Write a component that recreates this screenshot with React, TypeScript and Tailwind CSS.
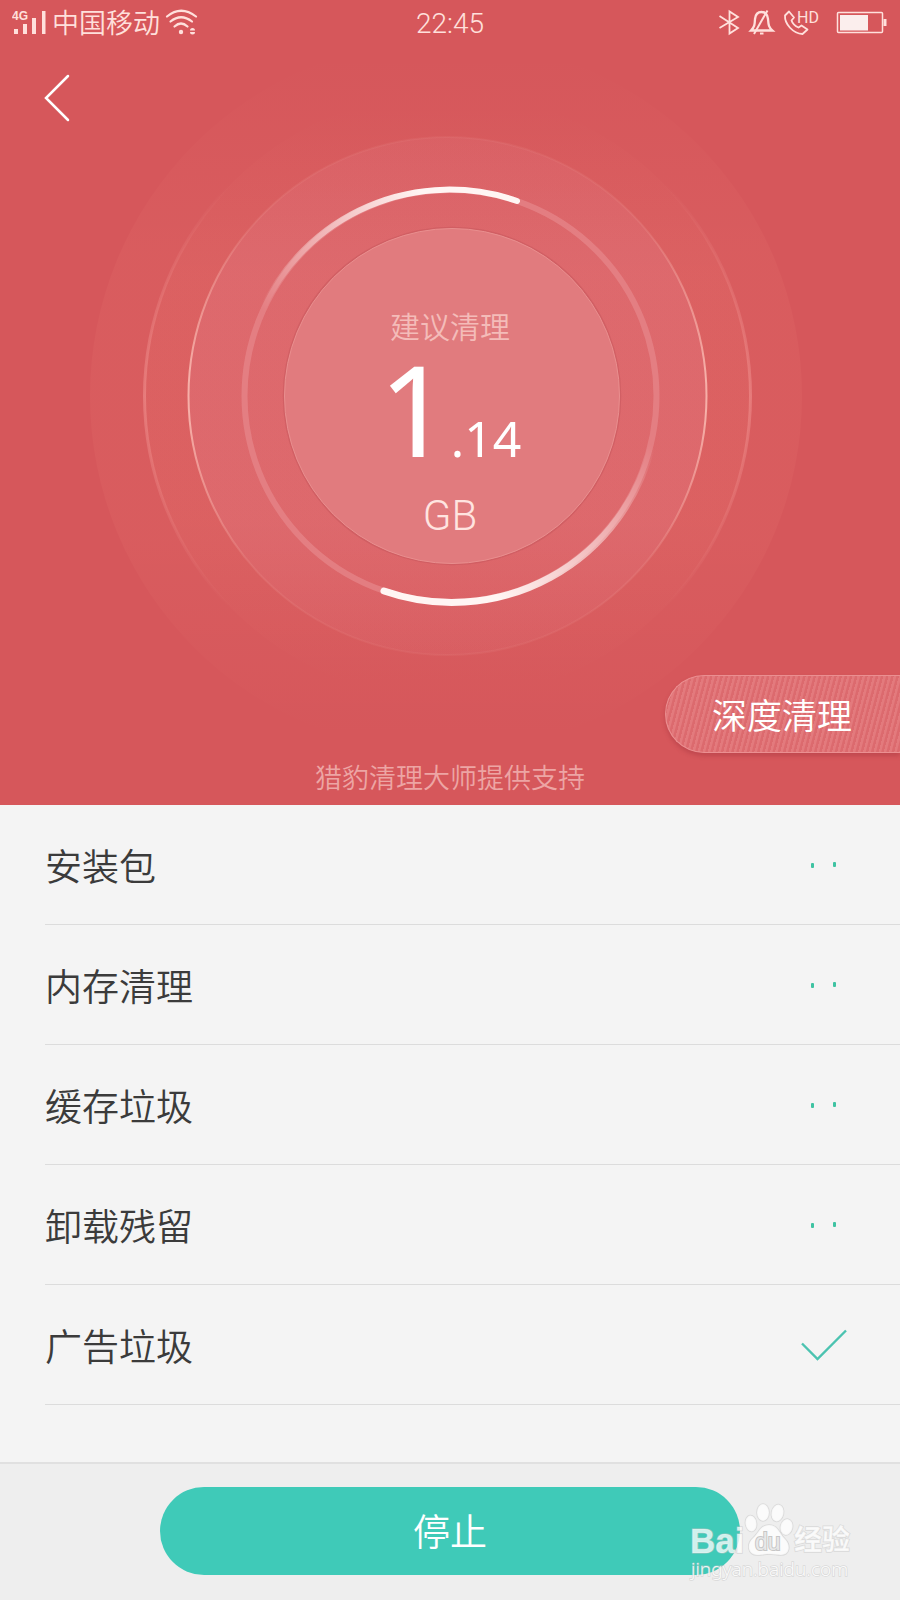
type RowStatus = 'scanning' | 'done';

interface ScanItem {
  name: string;
  status: RowStatus;
}

const items: ScanItem[] = [
  { name: '安装包', status: 'scanning' },
  { name: '内存清理', status: 'scanning' },
  { name: '缓存垃圾', status: 'scanning' },
  { name: '卸载残留', status: 'scanning' },
  { name: '广告垃圾', status: 'done' }
];

const SignalIcon = () => (
  <svg width="36" height="26" viewBox="12 9 36 26" fill="#ffe0dc">
    <text x="12" y="20" fontSize="12" fontWeight="700" fontFamily="Liberation Sans, sans-serif">4G</text>
    <rect x="14" y="29" width="4" height="5" />
    <rect x="23" y="24" width="4" height="10" />
    <rect x="32" y="18" width="4" height="16" />
    <rect x="42" y="11" width="3.500" height="23" />
  </svg>
);

const WifiIcon = () => (
  <svg width="34" height="26" viewBox="165 9 34 26" fill="none" stroke="#ffe0dc" strokeWidth="2.2" strokeLinecap="round">
    <path d="M168 16.500Q182 5 197 16.500" />
    <path d="M171.500 21.500Q182 13 193 21.500" />
    <path d="M175.500 26.500Q182 20.500 188.500 26.500" />
    <circle cx="182" cy="32" r="2.200" fill="#ffe0dc" stroke="none" />
    <path d="M191 30.500a2.500 2.500 0 0 1 5 0zM191 32a2.500 2.500 0 0 0 5 0z" fill="#ffe0dc" stroke="none" />
  </svg>
);

const StatusIcons = () => (
  <svg width="170" height="28" viewBox="718 8 170 28" fill="none" stroke="#ffe0dc" strokeWidth="1.8">
    {/* bluetooth */}
    <path d="M719.500 16L738 28L729.500 33.500V11.500L738 17L719.500 28" />
    {/* muted bell */}
    <path d="M751 30.500H772.500C768.500 27 768.500 25 768 19C767.500 14.500 765 12 761.500 12S755.500 14.500 755 19C754.700 25 754.500 27 751 30.500Z" strokeWidth="2.3" />
    <path d="M767.500 10.500L754 34" strokeWidth="2" />
    <path d="M760 33.500h3.500" strokeWidth="2" />
    {/* call */}
    <path d="M789 11.500L785 15.500C784.500 24 793 33.500 802.500 34L807.500 29.500L801.500 25.500L798.500 27.500C795 26 792.500 23.500 791.500 20.500L794 17.500Z" strokeLinejoin="round" />
    <text x="797" y="23" fontSize="16" fontWeight="400" fontFamily="Roboto, sans-serif" fill="#ffe0dc" stroke="none">HD</text>
    {/* battery */}
    <rect x="837.500" y="12.500" width="45" height="20" rx="1" strokeWidth="1.500" />
    <rect x="840" y="15" width="28" height="15.500" fill="#fbeeed" stroke="none" />
    <path d="M885 19V26" strokeWidth="3" />
  </svg>
);

const DialRings = () => (
  <svg className="col-start-1 row-start-1 mt-9 self-start justify-self-center" width="720" height="720" viewBox="90 36 720 720" fill="none">
    <defs>
      <linearGradient id="halo" x1="0" y1="0" x2="0" y2="1">
        <stop offset="0.02" stopColor="#ffa08c" stopOpacity="0" />
        <stop offset="0.3" stopColor="#ffa08c" stopOpacity="0.07" />
        <stop offset="0.7" stopColor="#ffa08c" stopOpacity="0.07" />
        <stop offset="0.98" stopColor="#ffa08c" stopOpacity="0" />
      </linearGradient>
      <linearGradient id="disc" x1="0" y1="0" x2="0" y2="1">
        <stop offset="0" stopColor="#e0747c" stopOpacity="0.26" />
        <stop offset="0.25" stopColor="#e0747c" stopOpacity="0.42" />
        <stop offset="0.75" stopColor="#e0747c" stopOpacity="0.4" />
        <stop offset="1" stopColor="#e0747c" stopOpacity="0.16" />
      </linearGradient>
      <linearGradient id="edge" x1="0" y1="0" x2="0" y2="1">
        <stop offset="0" stopColor="#ffc8be" stopOpacity="0.06" />
        <stop offset="0.18" stopColor="#ffc8be" stopOpacity="0.12" />
        <stop offset="0.46" stopColor="#ffc8be" stopOpacity="0.75" />
        <stop offset="0.54" stopColor="#ffc8be" stopOpacity="0.75" />
        <stop offset="0.82" stopColor="#ffc8be" stopOpacity="0.12" />
        <stop offset="1" stopColor="#ffc8be" stopOpacity="0.06" />
      </linearGradient>
      <linearGradient id="edgeSoft" x1="0" y1="0" x2="0" y2="1">
        <stop offset="0.15" stopColor="#ffb4b0" stopOpacity="0" />
        <stop offset="0.5" stopColor="#ffb4b0" stopOpacity="0.34" />
        <stop offset="0.85" stopColor="#ffb4b0" stopOpacity="0" />
      </linearGradient>
      <linearGradient id="arcTop" gradientUnits="userSpaceOnUse" x1="262" y1="310" x2="420" y2="190">
        <stop offset="0" stopColor="#fff5f3" stopOpacity="0" />
        <stop offset="1" stopColor="#fff5f3" />
      </linearGradient>
      <linearGradient id="arcBottom" gradientUnits="userSpaceOnUse" x1="500" y1="600" x2="652" y2="445">
        <stop offset="0" stopColor="#fff5f3" />
        <stop offset="1" stopColor="#fff5f3" stopOpacity="0" />
      </linearGradient>
    </defs>
    <circle cx="446" cy="396" r="356" fill="url(#halo)" />
    <circle cx="447.5" cy="396" r="303" fill="url(#halo)" stroke="url(#edgeSoft)" strokeWidth="3" />
    <circle cx="447.5" cy="396" r="259" fill="url(#disc)" stroke="url(#edge)" strokeWidth="2" />
    <circle cx="450.5" cy="396" r="206" stroke="#e68689" strokeOpacity="0.75" strokeWidth="6" />
    <path d="M262 310A206 206 0 0 1 517 201" stroke="url(#arcTop)" strokeWidth="6" strokeLinecap="round" />
    <path d="M384 591A206 206 0 0 0 652 445" stroke="url(#arcBottom)" strokeWidth="7" strokeLinecap="round" />
    <circle cx="452" cy="396" r="168.500" stroke="#c6565b" strokeOpacity="0.5" strokeWidth="1.500" />
    <circle cx="452" cy="396" r="167.500" fill="#e17b7e" stroke="#e98f8f" strokeWidth="1" />
  </svg>
);

const StatusMark = ({ status }: { status: RowStatus }) =>
  status === 'done' ? (
    <svg width="48" height="34" viewBox="0 0 48 34" fill="none" stroke="#4bc3b0" strokeWidth="2.4" role="img" aria-label="完成">
      <path d="M2 15.500L17.500 31L46 2.500" />
    </svg>
  ) : (
    <svg width="48" height="34" viewBox="0 0 48 34" fill="#3fc3a2" role="img" aria-label="扫描中">
      <rect x="11" y="15" width="3" height="5" rx="1" />
      <rect x="33" y="14" width="3" height="5" rx="1" />
    </svg>
  );

const Watermark = () => (
  <svg className="absolute right-10 bottom-4" width="174" height="90" viewBox="686 1494 174 90" fill="#ffffff" fillOpacity="0.75" stroke="#c4c4c4" strokeOpacity="0.5" strokeWidth="1.500" paintOrder="stroke">
    <ellipse cx="751" cy="1523.500" rx="5.500" ry="8" transform="rotate(-8 751 1523.500)" />
    <ellipse cx="763" cy="1512.500" rx="6" ry="8.500" />
    <ellipse cx="777.500" cy="1513" rx="6" ry="8.500" transform="rotate(12 777.500 1513)" />
    <ellipse cx="786.500" cy="1527" rx="6" ry="8" transform="rotate(12 786.500 1527)" />
    <path d="M769 1525C760 1525 759 1533 753 1538C746 1544 748 1555 757 1555C763 1555 765 1554 769 1554S777 1555 781 1555C790 1555 791 1545 785 1539C779 1533 778 1525 769 1525Z" />
    <text x="690" y="1553" fontSize="35" fontWeight="700" fontFamily="Liberation Sans, sans-serif">Bai</text>
    <text x="755" y="1550" fontSize="23" fontFamily="Liberation Sans, sans-serif" fill="#f4f4f4" stroke="#b8b8b8" strokeOpacity="0.8" strokeWidth="2">du</text>
    <text x="794" y="1550" fontSize="28" fontWeight="700" fontFamily="Noto Sans CJK SC, sans-serif">经验</text>
    <text x="691" y="1576" fontSize="19" fontFamily="Noto Sans, sans-serif" fillOpacity="0.9">jingyan.baidu.com</text>
  </svg>
);

const App = () => {
  return (
    <div className="relative flex min-h-screen flex-col bg-[#f4f4f4] font-['Noto_Sans_CJK_SC',sans-serif] font-[350] text-[#3b3b3b]">
      <header className="grid overflow-hidden bg-[#d6575b]">
        <DialRings />
        <div className="col-start-1 row-start-1 flex flex-col">
          {/* Status bar */}
          <div className="grid h-12 grid-cols-3 items-center px-3 pb-1 text-[#ffe0dc]">
            <div className="flex items-center gap-1">
              <SignalIcon />
              <span className="text-[27px] leading-8">中国移动</span>
              <WifiIcon />
            </div>
            <span className="pt-1 text-center font-['Roboto',sans-serif] text-[28px] leading-8 font-light">22:45</span>
            <div className="flex justify-end">
              <StatusIcons />
            </div>
          </div>

          <div className="flex h-[100px] items-center px-8">
            <button type="button" aria-label="返回" className="flex h-14 w-[50px] items-center justify-center">
              <svg width="26" height="48" viewBox="0 0 26 48" fill="none" stroke="#ffffff" strokeWidth="2.5">
                <path d="M24 2L2 24L24 46" strokeLinecap="round" />
              </svg>
            </button>
          </div>

          {/* Dial reading */}
          <div className="flex h-[527px] flex-col items-center pt-[154px]">
            <p className="text-[30px] leading-[46px] text-[#f4bcb9]">建议清理</p>
            <p className="flex items-baseline font-['Noto_Sans',sans-serif] font-normal text-white">
              <span className="text-[126px] leading-[120px]">1</span>
              <span className="text-[50px] leading-[50px]">.14</span>
            </p>
            <p className="mt-6 font-['Roboto',sans-serif] text-[42px] leading-[48px] font-light text-[#ffe4e0]">GB</p>
          </div>

          <div className="flex justify-end">
            <button
              type="button"
              className="h-[78px] rounded-l-full border border-r-0 border-[#eb8f91] bg-[#df6a6e] bg-[repeating-linear-gradient(105deg,#e37a7d_0px,#e37a7d_2px,#dc6a6e_3px,#dc6a6e_5px)] pr-12 pl-[46px] text-[35px] text-white shadow-[0_3px_4px_rgba(160,50,60,0.4)]"
            >
              深度清理
            </button>
          </div>
          <p className="h-[52px] text-center text-[27px] leading-[48px] text-[#eda5a4]">
            猎豹清理大师提供支持
          </p>
        </div>
      </header>

      <main className="flex-1">
        <ul className="pl-[45px]">
          {items.map((item) => (
            <li key={item.name} className="flex h-[120px] items-center justify-between border-b border-[#dcdcdc] pr-[52px]">
              <span className="text-[37px] leading-[48px]">{item.name}</span>
              <StatusMark status={item.status} />
            </li>
          ))}
        </ul>
      </main>

      <footer className="flex h-[138px] justify-center border-t-2 border-[#e0e0e0] bg-[#eeeeee] pt-[23px]">
        <button type="button" className="h-[88px] w-[580px] rounded-full bg-[#3fcab8] text-[37px] text-white">
          停止
        </button>
      </footer>

      <Watermark />
    </div>
  );
};

export default App;
